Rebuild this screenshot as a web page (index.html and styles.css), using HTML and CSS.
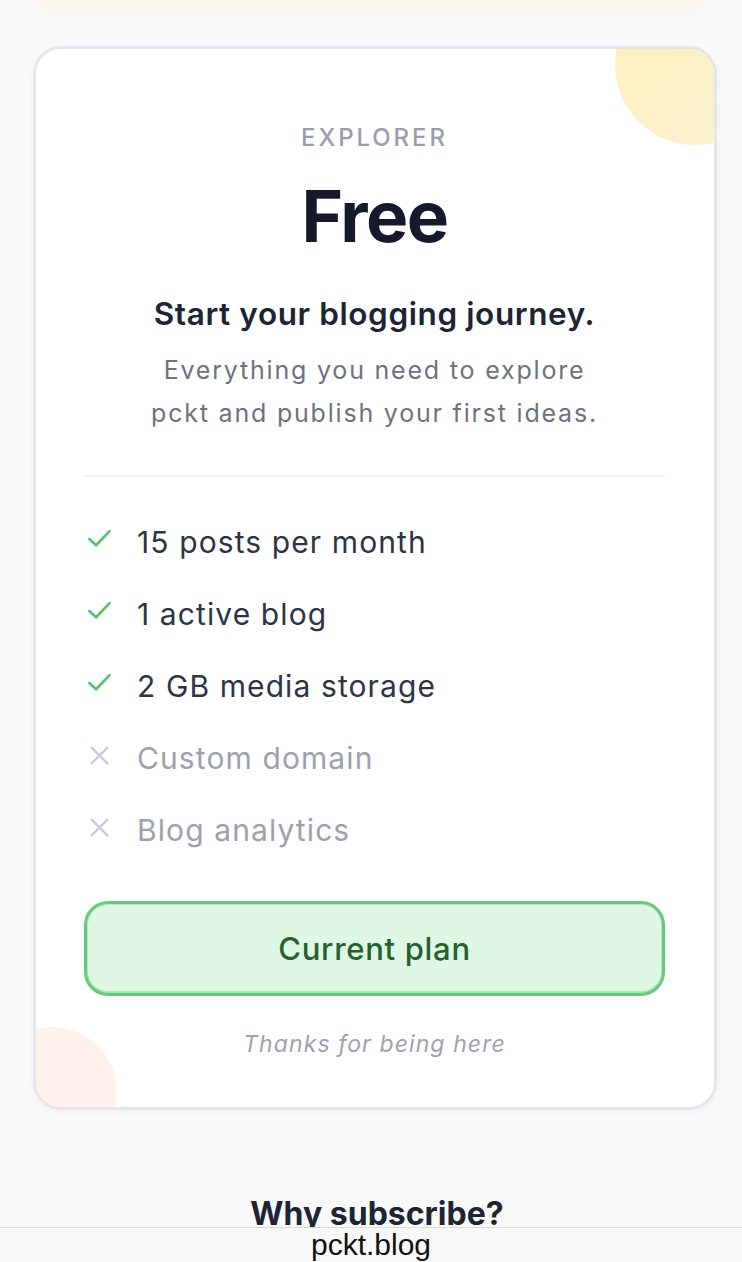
FILE: index.html
```html
<!DOCTYPE html>
<html lang="en">
<head>
<meta charset="utf-8">
<title>pckt.blog — Plans</title>
<link rel="stylesheet" href="styles.css">
</head>
<body>
<div class="viewport">
  <div class="glow"></div>
  <main class="page">
    <section class="card">
      <div class="blob blob-sun"></div>
      <div class="blob blob-peach"></div>
      <div class="card-body">
        <p class="tier">EXPLORER</p>
        <h1 class="price">Free</h1>
        <h2 class="tagline">Start your blogging journey.</h2>
        <p class="desc">Everything you need to explore<br>pckt and publish your first ideas.</p>
        <hr class="divider">
        <ul class="features">
          <li class="feat on">
            <svg class="ico" viewBox="0 0 24 24"><polyline points="3,12.5 9,18 21,5.5"/></svg>
            <span>15 posts per month</span>
          </li>
          <li class="feat on">
            <svg class="ico" viewBox="0 0 24 24"><polyline points="3,12.5 9,18 21,5.5"/></svg>
            <span>1 active blog</span>
          </li>
          <li class="feat on">
            <svg class="ico" viewBox="0 0 24 24"><polyline points="3,12.5 9,18 21,5.5"/></svg>
            <span>2 GB media storage</span>
          </li>
          <li class="feat off">
            <svg class="ico" viewBox="0 0 24 24"><path d="M3 3 L21 21 M21 3 L3 21"/></svg>
            <span>Custom domain</span>
          </li>
          <li class="feat off">
            <svg class="ico" viewBox="0 0 24 24"><path d="M3 3 L21 21 M21 3 L3 21"/></svg>
            <span>Blog analytics</span>
          </li>
        </ul>
        <button class="plan-btn" type="button">Current plan</button>
        <p class="thanks">Thanks for being here</p>
      </div>
    </section>
    <h2 class="why">Why subscribe?</h2>
  </main>
</div>
<div class="urlbar">pckt.blog</div>
</body>
</html>
```

FILE: styles.css
```css
* { box-sizing: border-box; }
html, body { margin: 0; padding: 0; }
body {
  background: #f9f9fa;
  font-family: Inter, "Noto Sans", sans-serif;
  color: #1b2132;
  height: 1262px;
  overflow: hidden;
  display: flex;
  flex-direction: column;
}
.viewport {
  height: 1227px;
  flex: none;
  overflow: hidden;
}
.glow {
  height: 16px;
  margin: 0 40px;
  background: linear-gradient(to bottom, rgba(253, 236, 210, 0.55), rgba(249, 249, 250, 0));
  border-radius: 0 0 40px 40px;
  filter: blur(3px);
}
.page {
  padding: 30px 25px 0 33px;
}
.card {
  position: relative;
  overflow: hidden;
  background: #ffffff;
  border: 3px solid #e5e5ec;
  border-radius: 28px;
  height: 1064px;
  box-shadow: 0 2px 6px rgba(30, 30, 60, 0.04);
}
.blob {
  position: absolute;
  border-radius: 50%;
}
.blob-sun {
  width: 160px;
  height: 160px;
  left: 579px;
  top: -64px;
  background: linear-gradient(135deg, #fdf0bb, #fcf0d2);
}
.blob-peach {
  width: 130px;
  height: 130px;
  left: -49px;
  top: 978px;
  background: #fdf1ea;
}
.card-body {
  position: relative;
  padding: 75px 49px 0 48px;
  display: flex;
  flex-direction: column;
  align-items: center;
  text-align: center;
}
.tier {
  margin: 0;
  font-size: 24px;
  line-height: 28px;
  font-weight: 500;
  letter-spacing: 2.9px;
  color: #9a9dab;
}
.price {
  margin: 24px 0 0;
  font-size: 71px;
  line-height: 80px;
  font-weight: 700;
  letter-spacing: -1.5px;
  color: #141a2c;
}
.tagline {
  margin: 38px 0 0;
  font-size: 31.5px;
  line-height: 40px;
  font-weight: 600;
  letter-spacing: 0.6px;
  color: #1d2434;
}
.desc {
  margin: 15px 0 0;
  font-size: 25px;
  line-height: 43px;
  color: #6b7280;
  letter-spacing: 1.8px;
}
.divider {
  align-self: stretch;
  border: 0;
  height: 2px;
  background: #f1f1f1;
  margin: 40px 0 0;
}
.features {
  align-self: stretch;
  list-style: none;
  margin: 43px 0 0;
  padding: 0;
  display: flex;
  flex-direction: column;
  gap: 28px;
  text-align: left;
}
.feat {
  display: flex;
  align-items: center;
  gap: 24px;
  font-size: 30px;
  line-height: 44px;
  letter-spacing: 1.1px;
}
.feat .ico {
  width: 27px;
  height: 27px;
  flex: none;
  fill: none;
  stroke-width: 2.4;
  stroke-linecap: round;
  stroke-linejoin: round;
  margin-top: -8px;
  margin-left: 2px;
}
.feat.on { color: #2d3445; }
.feat.on .ico { stroke: #5cbf6e; }
.feat.off { color: #9ca1ae; }
.feat.off .ico { stroke: #c9ccd4; width: 21px; height: 21px; margin-left: 5px; margin-right: 3px; margin-top: -6px; stroke-width: 2.6; }
.plan-btn {
  align-self: stretch;
  margin-top: 49px;
  height: 95px;
  border: 3px solid #66c97b;
  border-radius: 24px;
  background: #dff8e6;
  box-shadow: inset 0 0 0 1px rgba(160, 225, 175, 0.7), inset 0 -2px 0 rgba(120, 210, 140, 0.5);
  font-family: Inter, "Noto Sans", sans-serif;
  font-size: 31px;
  font-weight: 500;
  color: #24612f;
  letter-spacing: 0.7px;
}
.thanks {
  margin: 32px 0 0;
  font-size: 23px;
  line-height: 32px;
  font-style: italic;
  color: #9ea2ae;
  letter-spacing: 1.1px;
}
.why {
  margin: 82px 0 0;
  padding-left: 4px;
  text-align: center;
  font-size: 32px;
  line-height: 44px;
  font-weight: 700;
  color: #1d2434;
}
.urlbar {
  flex: none;
  height: 35px;
  border-top: 1px solid #d9d9de;
  background: #f8f8f9;
  text-align: center;
  font-family: "Liberation Sans", Arial, sans-serif;
  font-size: 30px;
  line-height: 33px;
  color: #111;
}
```
